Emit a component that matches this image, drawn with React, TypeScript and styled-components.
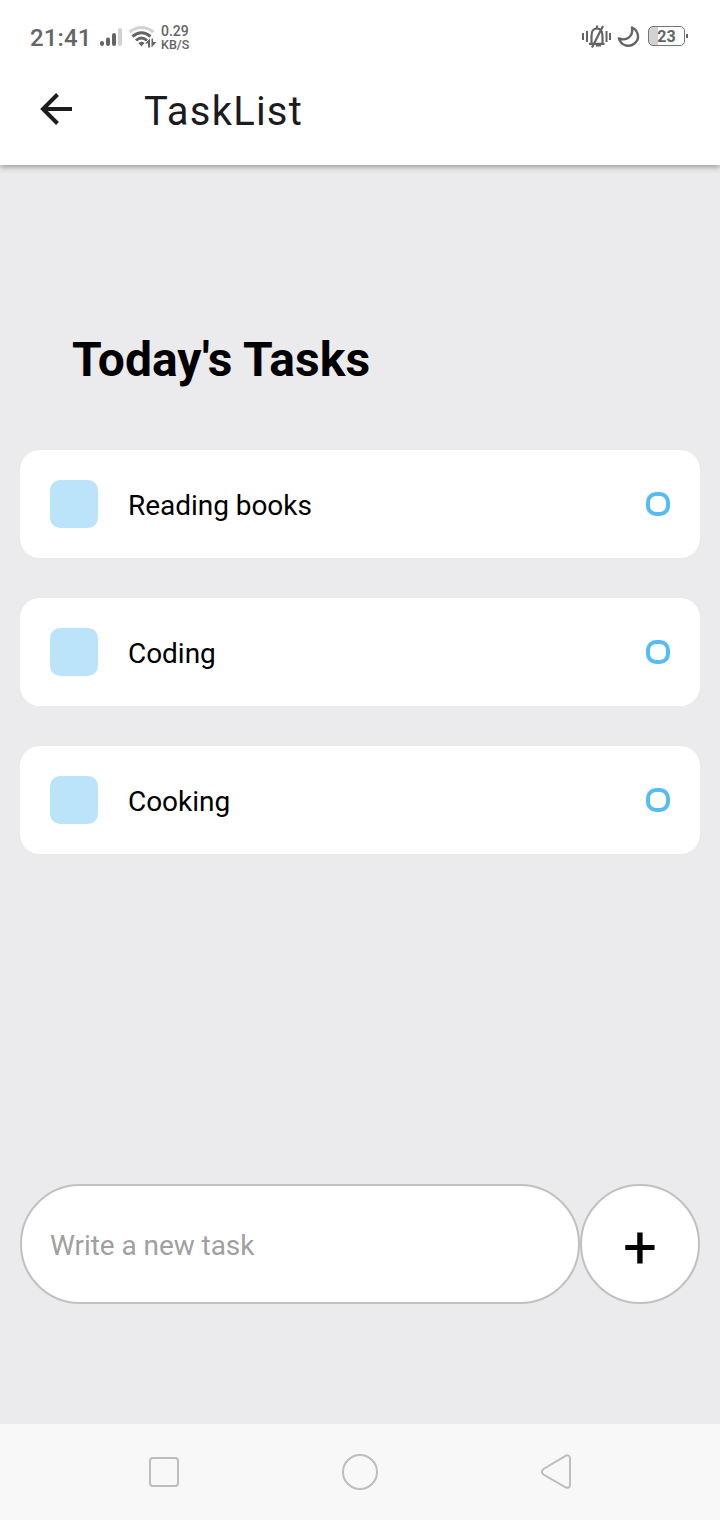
import React from 'react';
import styled, { createGlobalStyle } from 'styled-components';

const GlobalStyle = createGlobalStyle`
  * { box-sizing: border-box; }
  body { margin: 0; font-family: Roboto, "Liberation Sans", sans-serif; }
  button, input { font: inherit; }
`;

const Screen = styled.div`
  display: flex;
  flex-direction: column;
  width: 720px;
  height: 1520px;
  overflow: hidden;
  background: #ebebed;
`;

const Header = styled.header`
  flex: none;
  height: 165px;
  background: #fff;
  box-shadow: 0 2px 6px rgba(0, 0, 0, 0.36);
`;

const StatusBar = styled.div`
  display: flex;
  justify-content: space-between;
  height: 55px;
  padding: 0 32px 0 30px;
  color: #646464;
`;

const StatusGroup = styled.div`
  display: flex;
  align-items: flex-start;
`;

const StatusIcon = styled.svg<{ $left?: number }>`
  display: block;
  flex: none;
  margin-left: ${({ $left = 0 }) => $left}px;
`;

const Clock = styled.span`
  width: 70px;
  padding-top: 22px;
  font-size: 24px;
  font-weight: 500;
  line-height: 32px;
  letter-spacing: 0.1px;
`;

const NetSpeed = styled.span`
  display: flex;
  flex-direction: column;
  padding: 25px 0 0 4px;
  font-weight: 500;
  line-height: 13px;
`;

const SpeedLine = styled.span<{ $size: number }>`
  font-size: ${({ $size }) => $size}px;
  white-space: nowrap;
`;

const Battery = styled.div`
  display: flex;
  align-items: center;
  margin: 26px 0 0 7px;
`;

const BatteryCell = styled.div`
  width: 37px;
  height: 20px;
  border: 1.5px solid #757575;
  border-radius: 5px;
  background: linear-gradient(to right, #d2d2d2 9px, #fff 9px);
  font-size: 16px;
  font-weight: 700;
  line-height: 20px;
  text-align: center;
`;

const BatteryTip = styled.div`
  width: 2px;
  height: 4px;
  margin-left: 1px;
  background: #646464;
`;

const TitleBar = styled.div`
  display: flex;
  height: 110px;
  padding-left: 36px;
`;

const BackButton = styled.button`
  width: 40px;
  height: 40px;
  margin-top: 34px;
  padding: 0;
  border: 0;
  background: none;
`;

const Title = styled.h1`
  margin: 33px 0 0 68px;
  color: #1c1c1e;
  font-size: 40px;
  font-weight: 400;
  line-height: 48px;
  letter-spacing: 1.2px;
`;

const Content = styled.main`
  display: flex;
  flex: 1;
  flex-direction: column;
  padding: 165px 20px 120px;
`;

const Heading = styled.h2`
  margin: 0 0 60px 52px;
  color: #000;
  font-size: 48px;
  font-weight: 700;
  line-height: 60px;
  letter-spacing: 0.05px;
`;

const TaskList = styled.ul`
  display: flex;
  flex-direction: column;
  gap: 40px;
  margin: 0;
  padding: 0;
  list-style: none;
`;

const TaskRow = styled.li`
  display: flex;
  align-items: center;
  height: 108px;
  padding: 0 30px;
  border-radius: 20px;
  background: #fff;
`;

const TaskSquare = styled.span`
  width: 48px;
  height: 48px;
  border-radius: 10px;
  background: #bbe4fb;
`;

const TaskLabel = styled.span`
  flex: 1;
  padding: 3px 0 0 30px;
  color: #000;
  font-size: 28px;
  line-height: 36px;
  letter-spacing: -0.04px;
`;

const TaskMarker = styled.span`
  width: 24px;
  height: 24px;
  border: 4px solid #55bcf6;
  border-radius: 10px;
`;

const Composer = styled.form`
  display: flex;
  margin-top: auto;
`;

const TaskInput = styled.input`
  width: 560px;
  height: 120px;
  padding: 3px 28px 0;
  border: 2px solid #c0c0c0;
  border-radius: 60px;
  outline: 0;
  background: #fff;
  font-size: 28px;
  letter-spacing: -0.06px;
  &::placeholder { color: #a0a0a0; opacity: 1; }
`;

const AddButton = styled.button`
  width: 120px;
  height: 120px;
  padding: 8px 0 0;
  border: 2px solid #c0c0c0;
  border-radius: 60px;
  background: #fff;
  color: #000;
  font-size: 60px;
  line-height: 108px;
`;

const NavBar = styled.nav`
  display: flex;
  flex: none;
  align-items: center;
  justify-content: space-between;
  height: 96px;
  padding: 0 144px;
  background: #f8f8f8;
`;

const tasks = ['Reading books', 'Coding', 'Cooking'];

export default function App() {
  return (
    <Screen>
      <GlobalStyle />
      <Header>
        <StatusBar>
          <StatusGroup>
            <Clock>21:41</Clock>
            <StatusIcon width="23" height="50" viewBox="100 0 23 50">
              <g stroke="#646464" strokeWidth="4" strokeLinecap="round">
                <path d="M102 43v1M108 39.5V44M114 35V44" />
                <path d="M120 30V44" stroke="#d2d2d2" />
              </g>
            </StatusIcon>
            <StatusIcon width="30" height="50" viewBox="127 0 30 50" $left={4}>
              <g fill="none" stroke="#646464" strokeWidth="3">
                <path d="M129.5 32Q141.5 23 153.5 32" stroke="#d2d2d2" />
                <path d="M132.5 36.5Q141.5 29 150.5 36.5" />
                <path d="M136 40.5Q141.5 35.5 147 40.5" />
              </g>
              <path d="M138.5 43Q141.5 40.5 144.5 43L141.5 46.5ZM145 43.5L150 38.5V47.5H148V43.5ZM151.5 38.5H153V42H156.5L151.5 47.5Z" fill="#646464" />
            </StatusIcon>
            <NetSpeed>
              <SpeedLine $size={14}>0.29</SpeedLine>
              <SpeedLine $size={12.5}>KB/S</SpeedLine>
            </NetSpeed>
          </StatusGroup>
          <StatusGroup>
            <StatusIcon width="30" height="50" viewBox="582 0 30 50">
              <g fill="none" stroke="#646464" strokeWidth="2">
                <path d="M583 33v7M587 31v11M606.5 31v11M610 33v7" />
                <path d="M589 43.8H604.5M591.5 43V36Q591.5 28.5 597 28.5Q602.5 28.5 602.5 36V43M597 25.5V29M603 26L592 47.5M596 45.5H601" strokeWidth="2.2" />
              </g>
            </StatusIcon>
            <StatusIcon width="24" height="50" viewBox="617 0 24 50" $left={5}>
              <path d="M632 27.5C639 31 640 39 634.5 43.5C629 48 621 45.5 618.8 38.5C627 41.5 633.5 36 632 27.5Z" fill="none" stroke="#646464" strokeWidth="2.4" strokeLinejoin="round" />
            </StatusIcon>
            <Battery>
              <BatteryCell>23</BatteryCell>
              <BatteryTip />
            </Battery>
          </StatusGroup>
        </StatusBar>
        <TitleBar>
          <BackButton aria-label="Back">
            <svg width="40" height="40" viewBox="36 89 40 40">
              <path d="M72 109H43M57.5 94.5L43 109L57.5 123.5" fill="none" stroke="#1c1c1e" strokeWidth="4" />
            </svg>
          </BackButton>
          <Title>TaskList</Title>
        </TitleBar>
      </Header>
      <Content>
        <Heading>Today's Tasks</Heading>
        <TaskList>
          {tasks.map((task) => (
            <TaskRow key={task}>
              <TaskSquare />
              <TaskLabel>{task}</TaskLabel>
              <TaskMarker />
            </TaskRow>
          ))}
        </TaskList>
        <Composer onSubmit={(event) => event.preventDefault()}>
          <TaskInput placeholder="Write a new task" />
          <AddButton aria-label="Add task">+</AddButton>
        </Composer>
      </Content>
      <NavBar>
        <svg width="40" height="40" viewBox="144 1452 40 40">
          <rect x="150" y="1458" width="28" height="28" rx="3" fill="none" stroke="#bdbdbd" strokeWidth="2" />
        </svg>
        <svg width="40" height="40" viewBox="340 1452 40 40">
          <circle cx="360" cy="1472" r="17" fill="none" stroke="#bdbdbd" strokeWidth="2" />
        </svg>
        <svg width="40" height="40" viewBox="536 1452 40 40">
          <path d="M565.5 1455.8L543.5 1469Q540 1471.6 543.5 1474.5L565.5 1487.3Q570 1489 570 1484.5V1459Q570 1454 565.5 1455.8Z" fill="none" stroke="#bdbdbd" strokeWidth="2" />
        </svg>
      </NavBar>
    </Screen>
  );
}
